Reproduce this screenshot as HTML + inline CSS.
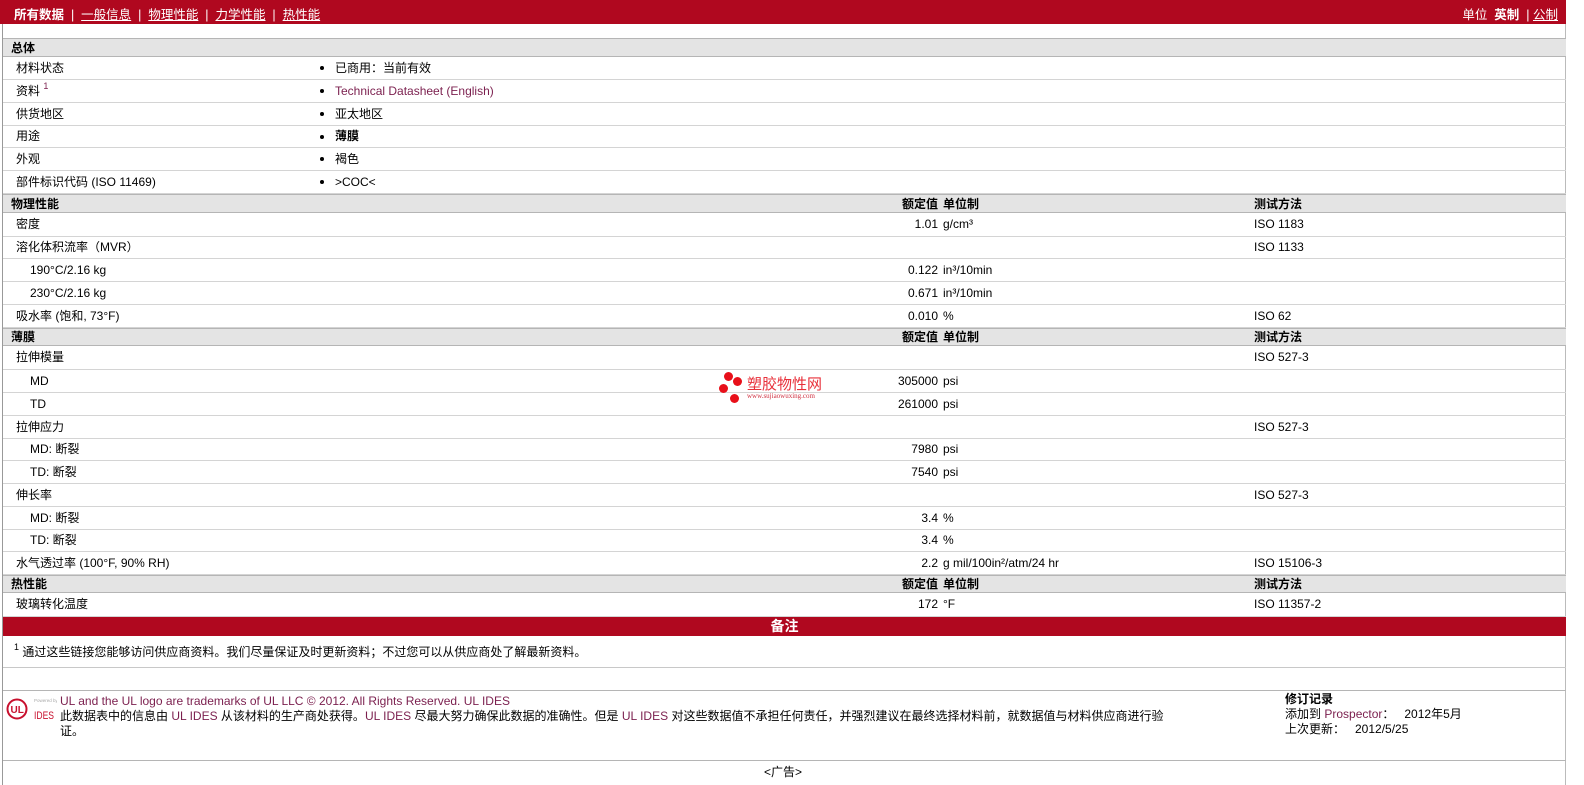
<!DOCTYPE html>
<html><head><meta charset="utf-8"><style>
body{margin:0;width:1584px;height:785px;background:#fff;font-family:"Liberation Sans","Noto Sans CJK SC",sans-serif;font-size:12px;color:#000;position:relative;overflow:hidden}
.a{position:absolute}
#top{left:0;top:0;width:1566px;height:24px;background:#b0081f;color:#fff;font-size:12.5px}
#top u{text-decoration:underline}
#frame{left:2px;top:24px;width:1564px;height:761px;border-left:1px solid #999;border-right:1px solid #bbb;box-sizing:border-box}
.r{position:absolute;left:3px;width:1563px;border-bottom:1px solid #d4d4d4;box-sizing:border-box}
.h{background:#e4e4e4;border-top:1px solid #b5b5b5;border-bottom:1px solid #b5b5b5;font-weight:bold}
.r span{position:absolute;white-space:nowrap}
.v{right:628px;text-align:right}
.lk{color:#7b1f4e}
.b{position:absolute;left:317px;top:50%;width:4px;height:4px;border-radius:50%;background:#000;margin-top:-2px}
sup{line-height:0;vertical-align:6px}
</style></head><body>
<div id="top" class="a">
<span class="a" style="left:14px;top:4px"><b>所有数据</b> &nbsp;|&nbsp; <u>一般信息</u> &nbsp;|&nbsp; <u>物理性能</u> &nbsp;|&nbsp; <u>力学性能</u> &nbsp;|&nbsp; <u>热性能</u></span>
<span class="a" style="right:8px;top:4px">单位 &nbsp;<b>英制</b> &nbsp;| <u>公制</u></span>
</div>
<div id="frame" class="a"></div>

<div id="rows"></div>
<script>
var R=[
['h',38,57,'总体'],
['d',57,80,'材料状态','•','已商用：当前有效'],
['d',80,103,'资料 <sup style="font-size:9px;color:#7b1f4e">1</sup>','•','<span class="lk" style="position:static">Technical Datasheet (English)</span>'],
['d',103,126,'供货地区','•','亚太地区'],
['d',126,148,'用途','•','<b>薄膜</b>'],
['d',148,171,'外观','•','褐色'],
['d',171,194,'部件标识代码 (ISO 11469)','•','&gt;COC&lt;'],
['h',194,213,'物理性能',1],
['p',213,237,'密度','1.01','g/cm³','ISO 1183'],
['p',237,259,'溶化体积流率（MVR）','','','ISO 1133'],
['s',259,282,'190°C/2.16 kg','0.122','in³/10min',''],
['s',282,305,'230°C/2.16 kg','0.671','in³/10min',''],
['p',305,328,'吸水率 (饱和, 73°F)','0.010','%','ISO 62'],
['h',328,346,'薄膜',1],
['p',346,370,'拉伸模量','','','ISO 527-3'],
['s',370,393,'MD','305000','psi',''],
['s',393,416,'TD','261000','psi',''],
['p',416,439,'拉伸应力','','','ISO 527-3'],
['s',439,461,'MD: 断裂','7980','psi',''],
['s',461,484,'TD: 断裂','7540','psi',''],
['p',484,507,'伸长率','','','ISO 527-3'],
['s',507,530,'MD: 断裂','3.4','%',''],
['s',530,552,'TD: 断裂','3.4','%',''],
['p',552,575,'水气透过率 (100°F, 90% RH)','2.2','g mil/100in²/atm/24 hr','ISO 15106-3'],
['h',575,593,'热性能',1],
['p',593,617,'玻璃转化温度','172','°F','ISO 11357-2']
];
var o='';
R.forEach(function(x){
var t=x[1],hh=x[2]-x[1],st='top:'+t+'px;height:'+hh+'px;line-height:'+(hh-1)+'px';
if(x[0]=='h'){o+='<div class="r h" style="'+st+'"><span style="left:8px">'+x[3]+'</span>'+(x[4]?'<span class="v">额定值</span><span style="left:940px">单位制</span><span style="left:1251px">测试方法</span>':'')+'</div>';}
else if(x[0]=='d'){o+='<div class="r" style="'+st+'"><span style="left:13px">'+x[3]+'</span><i class="b"></i><span style="left:332px">'+x[5]+'</span></div>';}
else{o+='<div class="r" style="'+st+'"><span style="left:'+(x[0]=='s'?27:13)+'px">'+x[3]+'</span><span class="v">'+x[4]+'</span><span style="left:940px">'+x[5]+'</span><span style="left:1251px">'+x[6]+'</span></div>';}
});
document.getElementById('rows').innerHTML=o;
</script>

<div class="a" style="left:3px;top:617px;width:1563px;height:19px;background:#b0081f;color:#fff;font-weight:bold;font-size:14px;text-align:center;line-height:19px">备注</div>
<div class="a" style="left:14px;top:643px"><sup style="font-size:9px">1</sup> 通过这些链接您能够访问供应商资料。我们尽量保证及时更新资料；不过您可以从供应商处了解最新资料。</div>
<div class="a" style="left:3px;top:667px;width:1563px;border-top:1px solid #c8c8c8"></div>
<div class="a" style="left:3px;top:690px;width:1563px;border-top:1px solid #b5b5b5"></div>
<div class="a" style="left:3px;top:760px;width:1563px;border-top:1px solid #b5b5b5"></div>

<svg class="a" style="left:5px;top:694px" width="52" height="30" viewBox="0 0 52 30">
<circle cx="12" cy="15" r="9.5" fill="none" stroke="#c8102e" stroke-width="2"/>
<text x="5.5" y="19" font-family="Liberation Sans" font-size="10" font-weight="bold" fill="#c8102e">UL</text>
<text x="29" y="8" font-family="Liberation Sans" font-size="4.5" fill="#aaa">Powered by</text>
<text x="29" y="25" font-family="Liberation Sans" font-size="11" fill="#c8102e" textLength="20" lengthAdjust="spacingAndGlyphs">IDES</text>
</svg>
<div class="a" style="left:60px;top:694px;line-height:15px;width:1180px">
<span class="lk">UL and the UL logo are trademarks of UL LLC © 2012. All Rights Reserved. UL IDES</span><br>
此数据表中的信息由 <span class="lk">UL IDES</span> 从该材料的生产商处获得。<span class="lk">UL IDES</span> 尽最大努力确保此数据的准确性。但是 <span class="lk">UL IDES</span> 对这些数据值不承担任何责任，并强烈建议在最终选择材料前，就数据值与材料供应商进行验<br>证。</div>
<div class="a" style="left:1285px;top:692px;line-height:15px">
<b>修订记录</b><br>添加到 <span class="lk">Prospector</span>： &nbsp; 2012年5月<br>上次更新： &nbsp; 2012/5/25</div>
<div class="a" style="left:764px;top:763px">&lt;广告&gt;</div>

<div class="a" style="left:718px;top:372px;width:140px;height:36px">
<i class="a" style="left:6px;top:0;width:9px;height:9px;border-radius:50%;background:#e8101a"></i>
<i class="a" style="left:15px;top:5px;width:9px;height:9px;border-radius:50%;background:#e8101a"></i>
<i class="a" style="left:1px;top:12px;width:9px;height:9px;border-radius:50%;background:#e8101a"></i>
<i class="a" style="left:12px;top:22px;width:9px;height:9px;border-radius:50%;background:#e8101a"></i>
<span class="a" style="left:29px;top:1px;font-size:15px;color:#e8303a">塑胶物性网</span>
<span class="a" style="left:29px;top:20px;font-size:7px;color:#d03040;font-family:'Liberation Serif',serif">www.sujiaowuxing.com</span>
</div>
</body></html>
